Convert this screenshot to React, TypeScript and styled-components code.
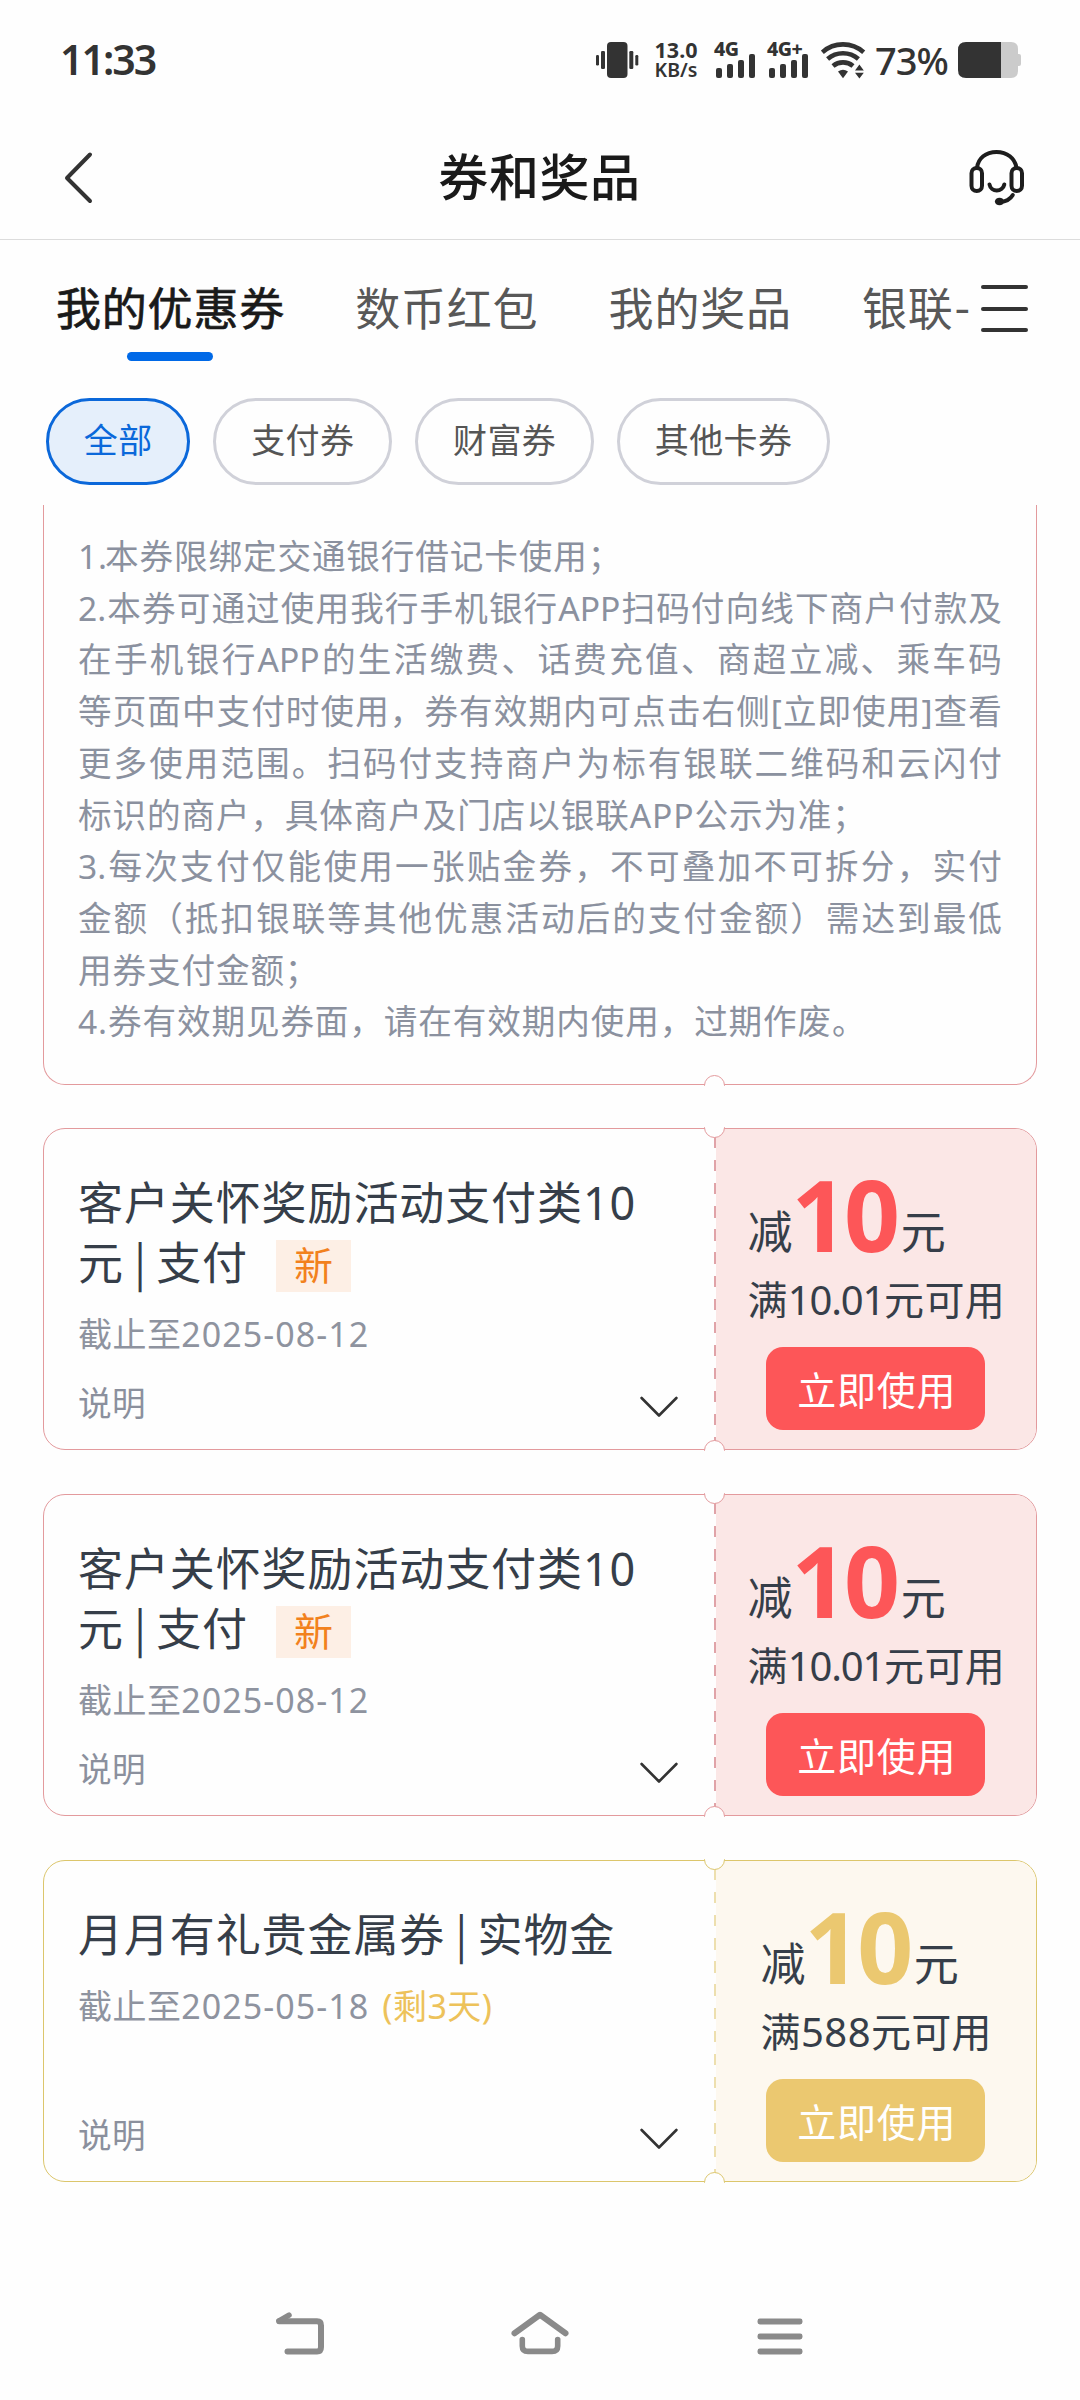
import React from "react";
import styled, { createGlobalStyle } from "styled-components";

const Global = createGlobalStyle`
  *, *::before, *::after { box-sizing: border-box; }
  html, body { margin: 0; padding: 0; background: #fefefe; }
  body { font-family: "Noto Sans", "Noto Sans CJK SC", sans-serif; }
`;

const Screen = styled.div`
  width: 1080px;
  height: 2400px;
  overflow: hidden;
  display: flex;
  flex-direction: column;
  background: #fefefe;
`;

/* ---------- status bar ---------- */
const StatusBar = styled.header`
  height: 120px;
  flex: none;
  display: flex;
  align-items: center;
  justify-content: space-between;
  padding: 0 59px 0 60px;
  color: #333;
`;
const Clock = styled.div`
  font-size: 41px;
  font-weight: 600;
  letter-spacing: -2px;
  line-height: 58px;
  padding-bottom: 2px;
`;
const StatusIcons = styled.div`
  display: flex;
  align-items: center;
  height: 36px;
`;
const Speed = styled.div`
  display: flex;
  flex-direction: column;
  align-items: center;
  width: 44px;
  margin: 0 16px 0 15px;
  font-weight: 700;
  font-size: 21.5px;
  line-height: 20px;
  white-space: nowrap;
`;
const SpeedUnit = styled.span`
  font-size: 19.5px;
  font-weight: 600;
`;
const Signal = styled.div<{ $gap: number }>`
  display: flex;
  flex-direction: column;
  position: relative;
  width: 42px;
  height: 36px;
  margin-right: ${(p) => p.$gap}px;
`;
const SignalTag = styled.span`
  position: absolute;
  left: 0;
  top: -3px;
  font-size: 19.5px;
  font-weight: 800;
  line-height: 20px;
  letter-spacing: -0.5px;
  white-space: nowrap;
`;
const SignalBars = styled.div`
  display: flex;
  align-items: flex-end;
  gap: 5px;
  height: 36px;
  padding-left: 2px;
`;
const SignalBar = styled.i<{ $h: number }>`
  width: 6px;
  height: ${(p) => p.$h}px;
  border-radius: 2px;
  background: #333;
`;
const Percent = styled.span`
  width: 72px;
  margin: 0 11px 0 9px;
  font-size: 38px;
  font-weight: 500;
  line-height: 40px;
  letter-spacing: -1px;
`;

/* ---------- title bar ---------- */
const TitleBar = styled.div`
  height: 120px;
  flex: none;
  display: flex;
  align-items: center;
  justify-content: space-between;
  padding: 0 55px 5px 64px;
  border-bottom: 1px solid #dcdcdc;
`;
const Title = styled.h1`
  margin: 0 10px 0 0;
  font-size: 50px;
  font-weight: 500;
  letter-spacing: 0.6px;
  line-height: 60px;
  color: #1a1a1a;
`;
const IconSlot = styled.div<{ $w: number }>`
  width: ${(p) => p.$w}px;
  display: flex;
  svg { display: block; }
`;

/* ---------- tabs ---------- */
const TabBar = styled.nav`
  height: 158px;
  flex: none;
  display: flex;
  padding: 36px 51px 0 56px;
`;
const TabList = styled.div`
  display: flex;
  gap: 70.2px;
  width: 914px;
  overflow: hidden;
`;
const Tab = styled.div<{ $active?: boolean }>`
  display: flex;
  flex: none;
  flex-direction: column;
  align-items: center;
  height: 100px;
  font-size: 45px;
  letter-spacing: 0.8px;
  line-height: 66px;
  white-space: nowrap;
  -webkit-text-stroke: ${(p) => (p.$active ? "0.7px #1a1a1a" : "0")};
  color: ${(p) => (p.$active ? "#1a1a1a" : "#585858")};
`;
const TabMarker = styled.span`
  width: 86px;
  height: 9px;
  margin: 10px 1px 0 0;
  border-radius: 4.5px;
  background: #0069e7;
`;
const Dash = styled.span`
  font-family: "Noto Sans CJK SC", sans-serif;
  line-height: 1;
  vertical-align: 2px;
  margin-left: 1px;
`;
const MenuButton = styled.div`
  display: flex;
  flex-direction: column;
  justify-content: space-between;
  width: 47px;
  height: 47px;
  margin: 9px 0 0 11px;
`;
const MenuLine = styled.i`
  height: 4px;
  border-radius: 2px;
  background: #333;
`;

/* ---------- filter chips ---------- */
const Chips = styled.div`
  flex: none;
  display: flex;
  gap: 23px;
  padding-left: 46px;
`;
const Chip = styled.div<{ $active?: boolean }>`
  height: 87px;
  padding: 0 34.8px;
  border: 3px solid ${(p) => (p.$active ? "#0b68da" : "#d0d1d9")};
  border-radius: 44px;
  background: ${(p) => (p.$active ? "#e5effb" : "#fefefe")};
  color: ${(p) => (p.$active ? "#0b68da" : "#555")};
  font-size: 34px;
  letter-spacing: 0.4px;
  line-height: 79px;
  white-space: nowrap;
`;

/* ---------- coupons ---------- */
const CouponList = styled.main`
  margin-top: 20px;
  height: 1700px;
  flex: none;
  overflow: hidden;
  display: flex;
  flex-direction: column;
  gap: 43.7px;
  padding: 0 43px;
`;
const TermsCard = styled.section`
  position: relative;
  flex: none;
  height: 579.5px;
  padding: 26px 34px 0 34px;
  border: 1px solid #e39a9d;
  border-top: none;
  border-radius: 0 0 22px 22px;
  font-size: 33.6px;
  line-height: 51.7px;
  color: #8b919f;
`;
const TermLine = styled.div<{ $full: boolean }>`
  display: flex;
  justify-content: ${(p) => (p.$full ? "space-between" : "flex-start")};
  white-space: nowrap;
  letter-spacing: ${(p) => (p.$full ? "0" : "0.9px")};
`;
const TermNumber = styled.span`
  margin-right: -3px;
`;

type Tone = { line: string; dash: string; tint: string; main: string };
const red: Tone = { line: "#e39a9d", dash: "#e0a3a8", tint: "#fbe7e6", main: "#fd5658" };
const gold: Tone = { line: "#dcc66c", dash: "#eddfae", tint: "#fdf8ef", main: "#ebc870" };

const CouponCard = styled.section<{ $tone: Tone }>`
  position: relative;
  flex: none;
  display: flex;
  height: 322px;
  border: 1px solid ${(p) => p.$tone.line};
  border-radius: 22px;
  background: #fefefe;
`;
const Notch = styled.span<{ $edge: "top" | "bottom"; $color: string }>`
  position: absolute;
  left: 660px;
  ${(p) => p.$edge}: -2px;
  width: 21px;
  height: 12px;
  overflow: hidden;
  &::before {
    content: "";
    position: absolute;
    left: 0;
    ${(p) => p.$edge}: -10px;
    width: 21px;
    height: 21px;
    border: 1px solid ${(p) => p.$color};
    border-radius: 50%;
    background: #fefefe;
  }
`;
const Info = styled.div`
  width: 669.5px;
  display: flex;
  flex-direction: column;
  padding: 44px 35.5px 21px 34px;
`;
const CouponName = styled.h2`
  margin: 0;
  width: 580px;
  font-size: 45px;
  letter-spacing: 0.9px;
  font-weight: 400;
  line-height: 60px;
  color: #363e49;
`;
const Bar = styled.span`
  font-family: "Noto Sans CJK SC", sans-serif;
  line-height: 1;
  letter-spacing: 0;
`;
const NewTag = styled.span`
  display: inline-block;
  width: 75px;
  height: 52px;
  margin: 7px 0 0 28px;
  vertical-align: top;
  background: #fdefe5;
  color: #f2811d;
  font-size: 39px;
  letter-spacing: 0;
  line-height: 49px;
  text-align: center;
`;
const Expiry = styled.div`
  display: flex;
  gap: 13px;
  margin-top: 16px;
  font-size: 34px;
  letter-spacing: 0.45px;
  line-height: 50px;
  color: #8e939f;
`;
const DateText = styled.span`
  letter-spacing: 1.05px;
`;
const DaysLeft = styled.span`
  color: #edc25a;
`;
const Explain = styled.div`
  display: flex;
  align-items: center;
  justify-content: space-between;
  margin-top: auto;
  font-size: 33.6px;
  letter-spacing: 0.45px;
  line-height: 50px;
  color: #8b909d;
  svg { margin-top: 8px; }
`;
const Offer = styled.div<{ $tone: Tone }>`
  position: relative;
  flex: 1;
  display: flex;
  flex-direction: column;
  align-items: center;
  padding: 32px 0 0 2px;
  background: ${(p) => p.$tone.tint};
  border-radius: 0 21px 21px 0;
  &::before {
    content: "";
    position: absolute;
    left: 0;
    top: 8px;
    bottom: 8px;
    width: 2px;
    background: repeating-linear-gradient(
      to bottom,
      ${(p) => p.$tone.dash} 0 11.3px,
      #fefefe 11.3px 23.1px
    );
  }
`;
const OfferText = styled.div`
  display: flex;
  flex-direction: column;
  padding-left: 1px;
  color: #363e49;
`;
const Amount = styled.div`
  height: 111px;
  font-size: 45px;
  line-height: 106px;
  white-space: nowrap;
`;
const AmountUnit = styled.span`
  line-height: 1;
  vertical-align: 3.5px;
`;
const Digits = styled.b<{ $color: string }>`
  margin: 0 4px 0 -1px;
  font-size: 98px;
  font-weight: 700;
  letter-spacing: -3.5px;
  color: ${(p) => p.$color};
`;
const Threshold = styled.div`
  font-size: 40px;
  letter-spacing: 0.3px;
  line-height: 56px;
  white-space: nowrap;
`;
const Tight = styled.span<{ $s: number }>`
  letter-spacing: ${(p) => p.$s}px;
`;
const UseButton = styled.button<{ $color: string }>`
  width: 219px;
  height: 83px;
  margin: 19px 0 0;
  padding: 0 0 0 2px;
  border: none;
  border-radius: 17px;
  background: ${(p) => p.$color};
  color: #fff;
  font-family: inherit;
  font-size: 39px;
  letter-spacing: 0.8px;
  line-height: 86px;
`;

/* ---------- system navigation ---------- */
const SystemNav = styled.footer`
  margin-top: auto;
  flex: none;
  height: 89px;
  display: grid;
  grid-template-columns: repeat(3, 240px);
  justify-content: center;
  justify-items: center;
  align-items: start;
`;

const VibrateIcon = () => (
  <svg width="43" height="36" viewBox="0 0 43 36" fill="#333">
    <rect x="11" y="0" width="20.5" height="36" rx="4" />
    <rect x="5" y="9" width="4" height="18" rx="1.2" />
    <rect x="0" y="13" width="3" height="10.5" rx="1.2" />
    <rect x="33.3" y="9" width="4" height="18" rx="1.2" />
    <rect x="39.3" y="13" width="3" height="10.5" rx="1.2" />
  </svg>
);

const WifiIcon = () => (
  <svg width="45" height="37" viewBox="0 0 45 37" fill="none">
    <g stroke="#333" strokeWidth="4.6">
      <path d="M1.3 10.3 A31 31 0 0 1 42.7 10.3" />
      <path d="M6.6 17 A23.5 23.5 0 0 1 37.4 17" />
      <path d="M12 24 A15.5 15.5 0 0 1 32 24" />
    </g>
    <path d="M17 29.5 Q22 26 27 29.5 L22 36.3 Z" fill="#333" />
    <path d="M34 28.6 L38.4 22.5 L42.8 28.6 Z M34 30.8 H42.8 L38.4 36.5 Z" fill="#333" />
  </svg>
);

const BatteryIcon = () => (
  <svg width="63" height="36" viewBox="0 0 63 36">
    <path d="M42 0 H53 Q60 0 60 7 V12 H61 Q63 12 63 14 V22 Q63 24 61 24 H60 V29 Q60 36 53 36 H42 Z" fill="#cbcbcb" />
    <path d="M43 0 H8 Q0 0 0 8 V28 Q0 36 8 36 H43 Z" fill="#333" />
  </svg>
);

const BackChevron = () => (
  <svg width="30" height="54" viewBox="0 0 30 54" fill="none" stroke="#333" strokeWidth="4" strokeLinecap="round" strokeLinejoin="round">
    <path d="M26 4.5 L3 28 L26 51" />
  </svg>
);

const HeadsetIcon = () => (
  <svg width="56" height="58" viewBox="0 0 56 58" fill="none" stroke="#1d1d1d" strokeWidth="4" strokeLinecap="round">
    <path d="M8 20 C9 10 17 4 27.5 4 C38 4 46 10 47.5 20" />
    <rect x="2.5" y="20" width="10.5" height="23" rx="5.2" />
    <rect x="42.5" y="20" width="10.5" height="23" rx="5.2" />
    <path d="M20.5 36.5 C22 44.5 33.5 44.5 35.3 36.5" />
    <path d="M31 54 Q40 53.5 43.8 47" />
    <ellipse cx="30.5" cy="53.5" rx="4.6" ry="3.8" fill="#1d1d1d" stroke="none" />
  </svg>
);

const DownIcon = () => (
  <svg width="38" height="22" viewBox="0 0 38 22" fill="none" stroke="#333" strokeWidth="2.6" strokeLinecap="round" strokeLinejoin="round">
    <path d="M1.6 2 L19 19.5 L36.4 2" />
  </svg>
);

const NavBack = () => (
  <svg width="50" height="44" viewBox="0 0 50 44" fill="none" stroke="#8a8a8a" strokeLinecap="round" strokeLinejoin="round">
    <path strokeWidth="6" d="M4.2 10.3 H42 Q46 10.3 46 14.5 V36 Q46 40.5 42 40.5 H12.5" />
    <path strokeWidth="5.5" d="M4 9.8 L14 4.2" />
  </svg>
);
const NavHome = () => (
  <svg width="58" height="44" viewBox="0 0 58 44" fill="none" stroke="#8a8a8a" strokeLinecap="round" strokeLinejoin="round">
    <path strokeWidth="6" d="M3.5 22.3 L29 3.8 L54.5 22.3" />
    <path strokeWidth="5.6" d="M11.3 28.5 V35 Q11.3 40.4 17 40.4 H41 Q46.7 40.4 46.7 35 V28.5" />
  </svg>
);
const NavMenu = () => (
  <svg width="46" height="44" viewBox="0 0 46 44" fill="#8a8a8a">
    <rect x="0.5" y="7.5" width="45" height="6" rx="2.4" />
    <rect x="0.5" y="22.5" width="45" height="6" rx="2.4" />
    <rect x="0.5" y="37.5" width="45" height="6" rx="2.4" />
  </svg>
);

const SignalMeter = ({ tag, gap }: { tag: string; gap: number }) => (
  <Signal $gap={gap}>
    <SignalTag>{tag}</SignalTag>
    <SignalBars>
      {[10, 14, 18, 24.5].map((h) => (
        <SignalBar key={h} $h={h} />
      ))}
    </SignalBars>
  </Signal>
);

const terms = [
  { text: "1.本券限绑定交通银行借记卡使用；", full: false },
  { text: "2.本券可通过使用我行手机银行APP扫码付向线下商户付款及", full: true },
  { text: "在手机银行APP的生活缴费、话费充值、商超立减、乘车码", full: true },
  { text: "等页面中支付时使用，券有效期内可点击右侧[立即使用]查看", full: true },
  { text: "更多使用范围。扫码付支持商户为标有银联二维码和云闪付", full: true },
  { text: "标识的商户，具体商户及门店以银联APP公示为准；", full: false },
  { text: "3.每次支付仅能使用一张贴金券，不可叠加不可拆分，实付", full: true },
  { text: "金额（抵扣银联等其他优惠活动后的支付金额）需达到最低", full: true },
  { text: "用券支付金额；", full: false },
  { text: "4.券有效期见券面，请在有效期内使用，过期作废。", full: false },
];

/* Latin runs stay whole, every other character is a spacing unit of its own */
const units = (text: string) => text.match(/[0-9A-Z.]+|./g) ?? [];

const Term = ({ text, full }: { text: string; full: boolean }) => {
  if (full) {
    return (
      <TermLine $full>
        {units(text).map((u, i) => (
          <span key={i}>{u}</span>
        ))}
      </TermLine>
    );
  }
  if (text.startsWith("1.")) {
    return (
      <TermLine $full={false}>
        <TermNumber>1.</TermNumber>
        <span>{text.slice(2)}</span>
      </TermLine>
    );
  }
  return <TermLine $full={false}>{text}</TermLine>;
};

type CouponProps = {
  tone: Tone;
  name: string;
  kind: string;
  isNew?: boolean;
  until: string;
  left?: string;
  limit: string;
  limitSpacing: number;
};

const Coupon = ({ tone, name, kind, isNew, until, left, limit, limitSpacing }: CouponProps) => (
  <CouponCard $tone={tone}>
    <Info>
      <CouponName>
        {name}
        <Bar> | </Bar>
        {kind}
        {isNew && <NewTag>新</NewTag>}
      </CouponName>
      <Expiry>
        <span>
          截止至<DateText>{until}</DateText>
        </span>
        {left && <DaysLeft>{left}</DaysLeft>}
      </Expiry>
      <Explain>
        <span>说明</span>
        <DownIcon />
      </Explain>
    </Info>
    <Offer $tone={tone}>
      <OfferText>
        <Amount>
          <AmountUnit>减</AmountUnit>
          <Digits $color={tone.main}>10</Digits>
          <AmountUnit>元</AmountUnit>
        </Amount>
        <Threshold>
          满<Tight $s={limitSpacing}>{limit}</Tight>元可用
        </Threshold>
      </OfferText>
      <UseButton $color={tone.main}>立即使用</UseButton>
    </Offer>
    <Notch $edge="top" $color={tone.line} />
    <Notch $edge="bottom" $color={tone.line} />
  </CouponCard>
);

export default function App() {
  return (
    <Screen>
      <Global />
      <StatusBar>
        <Clock>11:33</Clock>
        <StatusIcons>
          <VibrateIcon />
          <Speed>
            <span>13.0</span>
            <SpeedUnit>KB/s</SpeedUnit>
          </Speed>
          <SignalMeter tag="4G" gap={11} />
          <SignalMeter tag="4G+" gap={12} />
          <WifiIcon />
          <Percent>73%</Percent>
          <BatteryIcon />
        </StatusIcons>
      </StatusBar>

      <TitleBar>
        <IconSlot $w={56}>
          <BackChevron />
        </IconSlot>
        <Title>券和奖品</Title>
        <IconSlot $w={56}>
          <HeadsetIcon />
        </IconSlot>
      </TitleBar>

      <TabBar>
        <TabList>
          <Tab $active>
            我的优惠券
            <TabMarker />
          </Tab>
          <Tab>数币红包</Tab>
          <Tab>我的奖品</Tab>
          <Tab>
            <span>
              银联<Dash>-</Dash>
            </span>
          </Tab>
        </TabList>
        <MenuButton>
          <MenuLine />
          <MenuLine />
          <MenuLine />
        </MenuButton>
      </TabBar>

      <Chips>
        <Chip $active>全部</Chip>
        <Chip>支付券</Chip>
        <Chip>财富券</Chip>
        <Chip>其他卡券</Chip>
      </Chips>

      <CouponList>
        <TermsCard>
          {terms.map((t) => (
            <Term key={t.text} text={t.text} full={t.full} />
          ))}
          <Notch $edge="bottom" $color={red.line} />
        </TermsCard>
        <Coupon tone={red} name="客户关怀奖励活动支付类10元" kind="支付" isNew until="2025-08-12" limit="10.01" limitSpacing={-1.2} />
        <Coupon tone={red} name="客户关怀奖励活动支付类10元" kind="支付" isNew until="2025-08-12" limit="10.01" limitSpacing={-1.2} />
        <Coupon tone={gold} name="月月有礼贵金属券" kind="实物金" until="2025-05-18" left="(剩3天)" limit="588" limitSpacing={0.5} />
      </CouponList>

      <SystemNav>
        <NavBack />
        <NavHome />
        <NavMenu />
      </SystemNav>
    </Screen>
  );
}
